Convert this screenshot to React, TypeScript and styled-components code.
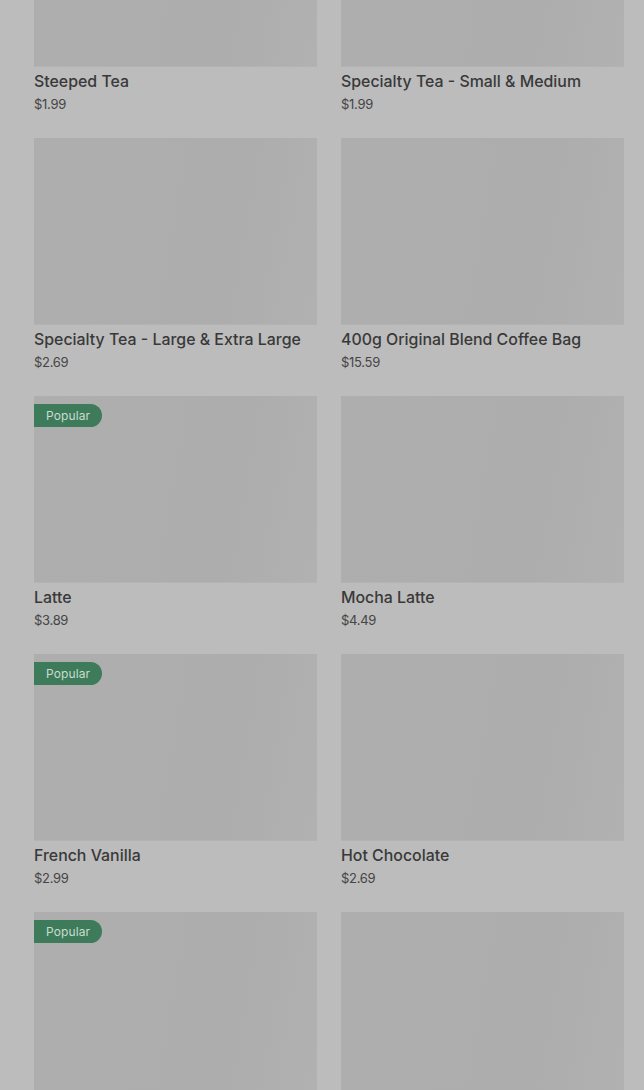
import React from "react";
import styled, { createGlobalStyle } from "styled-components";

const GlobalStyle = createGlobalStyle`
  html, body {
    margin: 0;
    padding: 0;
    background: #bcbcbc;
    overflow: hidden;
  }
  body {
    font-family: Inter, Roboto, "Liberation Sans", sans-serif;
    color: #3a3a3a;
  }
`;

const Page = styled.main`
  height: 1090px;
  overflow: hidden;
  background: #bcbcbc;
`;

const Grid = styled.div`
  display: grid;
  grid-template-columns: 283px 283px;
  column-gap: 24px;
  row-gap: 23px;
  padding: 0 20px 0 34px;
  margin-top: -120px;
`;

const Card = styled.article`
  display: flex;
  flex-direction: column;
`;

const ImageBox = styled.div`
  position: relative;
  height: 187px;
  background: linear-gradient(100deg, #aeaeae 0%, #adadad 70%, #b1b1b1 100%);
  box-shadow: inset 0 -1px 0 #b3b3b3;
`;

const Badge = styled.span`
  position: absolute;
  top: 8px;
  left: 0;
  height: 23px;
  padding: 0 12px 0 12px;
  display: flex;
  align-items: center;
  background: #3e7b5b;
  color: #c9dccf;
  font-size: 12px;
  font-weight: 400;
  letter-spacing: 0.1px;
  border-radius: 0 12px 12px 0;
`;

const Title = styled.h3`
  margin: 3px 0 0;
  font-size: 15.9px;
  line-height: 23px;
  font-weight: 500;
  color: #393939;
  white-space: nowrap;
`;

const Price = styled.p`
  margin: 0;
  font-size: 13px;
  line-height: 22px;
  font-weight: 400;
  color: #454545;
  letter-spacing: -0.3px;
`;

type Item = { id: string; name?: string; price?: string; popular?: boolean };

const items: Item[] = [
  { id: "a", name: "Steeped Tea", price: "$1.99" },
  { id: "b", name: "Specialty Tea - Small & Medium", price: "$1.99" },
  { id: "c", name: "Specialty Tea - Large & Extra Large", price: "$2.69" },
  { id: "d", name: "400g Original Blend Coffee Bag", price: "$15.59" },
  { id: "e", name: "Latte", price: "$3.89", popular: true },
  { id: "f", name: "Mocha Latte", price: "$4.49" },
  { id: "g", name: "French Vanilla", price: "$2.99", popular: true },
  { id: "h", name: "Hot Chocolate", price: "$2.69" },
  { id: "i", popular: true },
  { id: "j" },
];

export default function App() {
  return (
    <>
      <GlobalStyle />
      <Page>
        <Grid>
          {items.map((it) => (
            <Card key={it.id}>
              <ImageBox>{it.popular && <Badge>Popular</Badge>}</ImageBox>
              {it.name && <Title>{it.name}</Title>}
              {it.price && <Price>{it.price}</Price>}
            </Card>
          ))}
        </Grid>
      </Page>
    </>
  );
}
